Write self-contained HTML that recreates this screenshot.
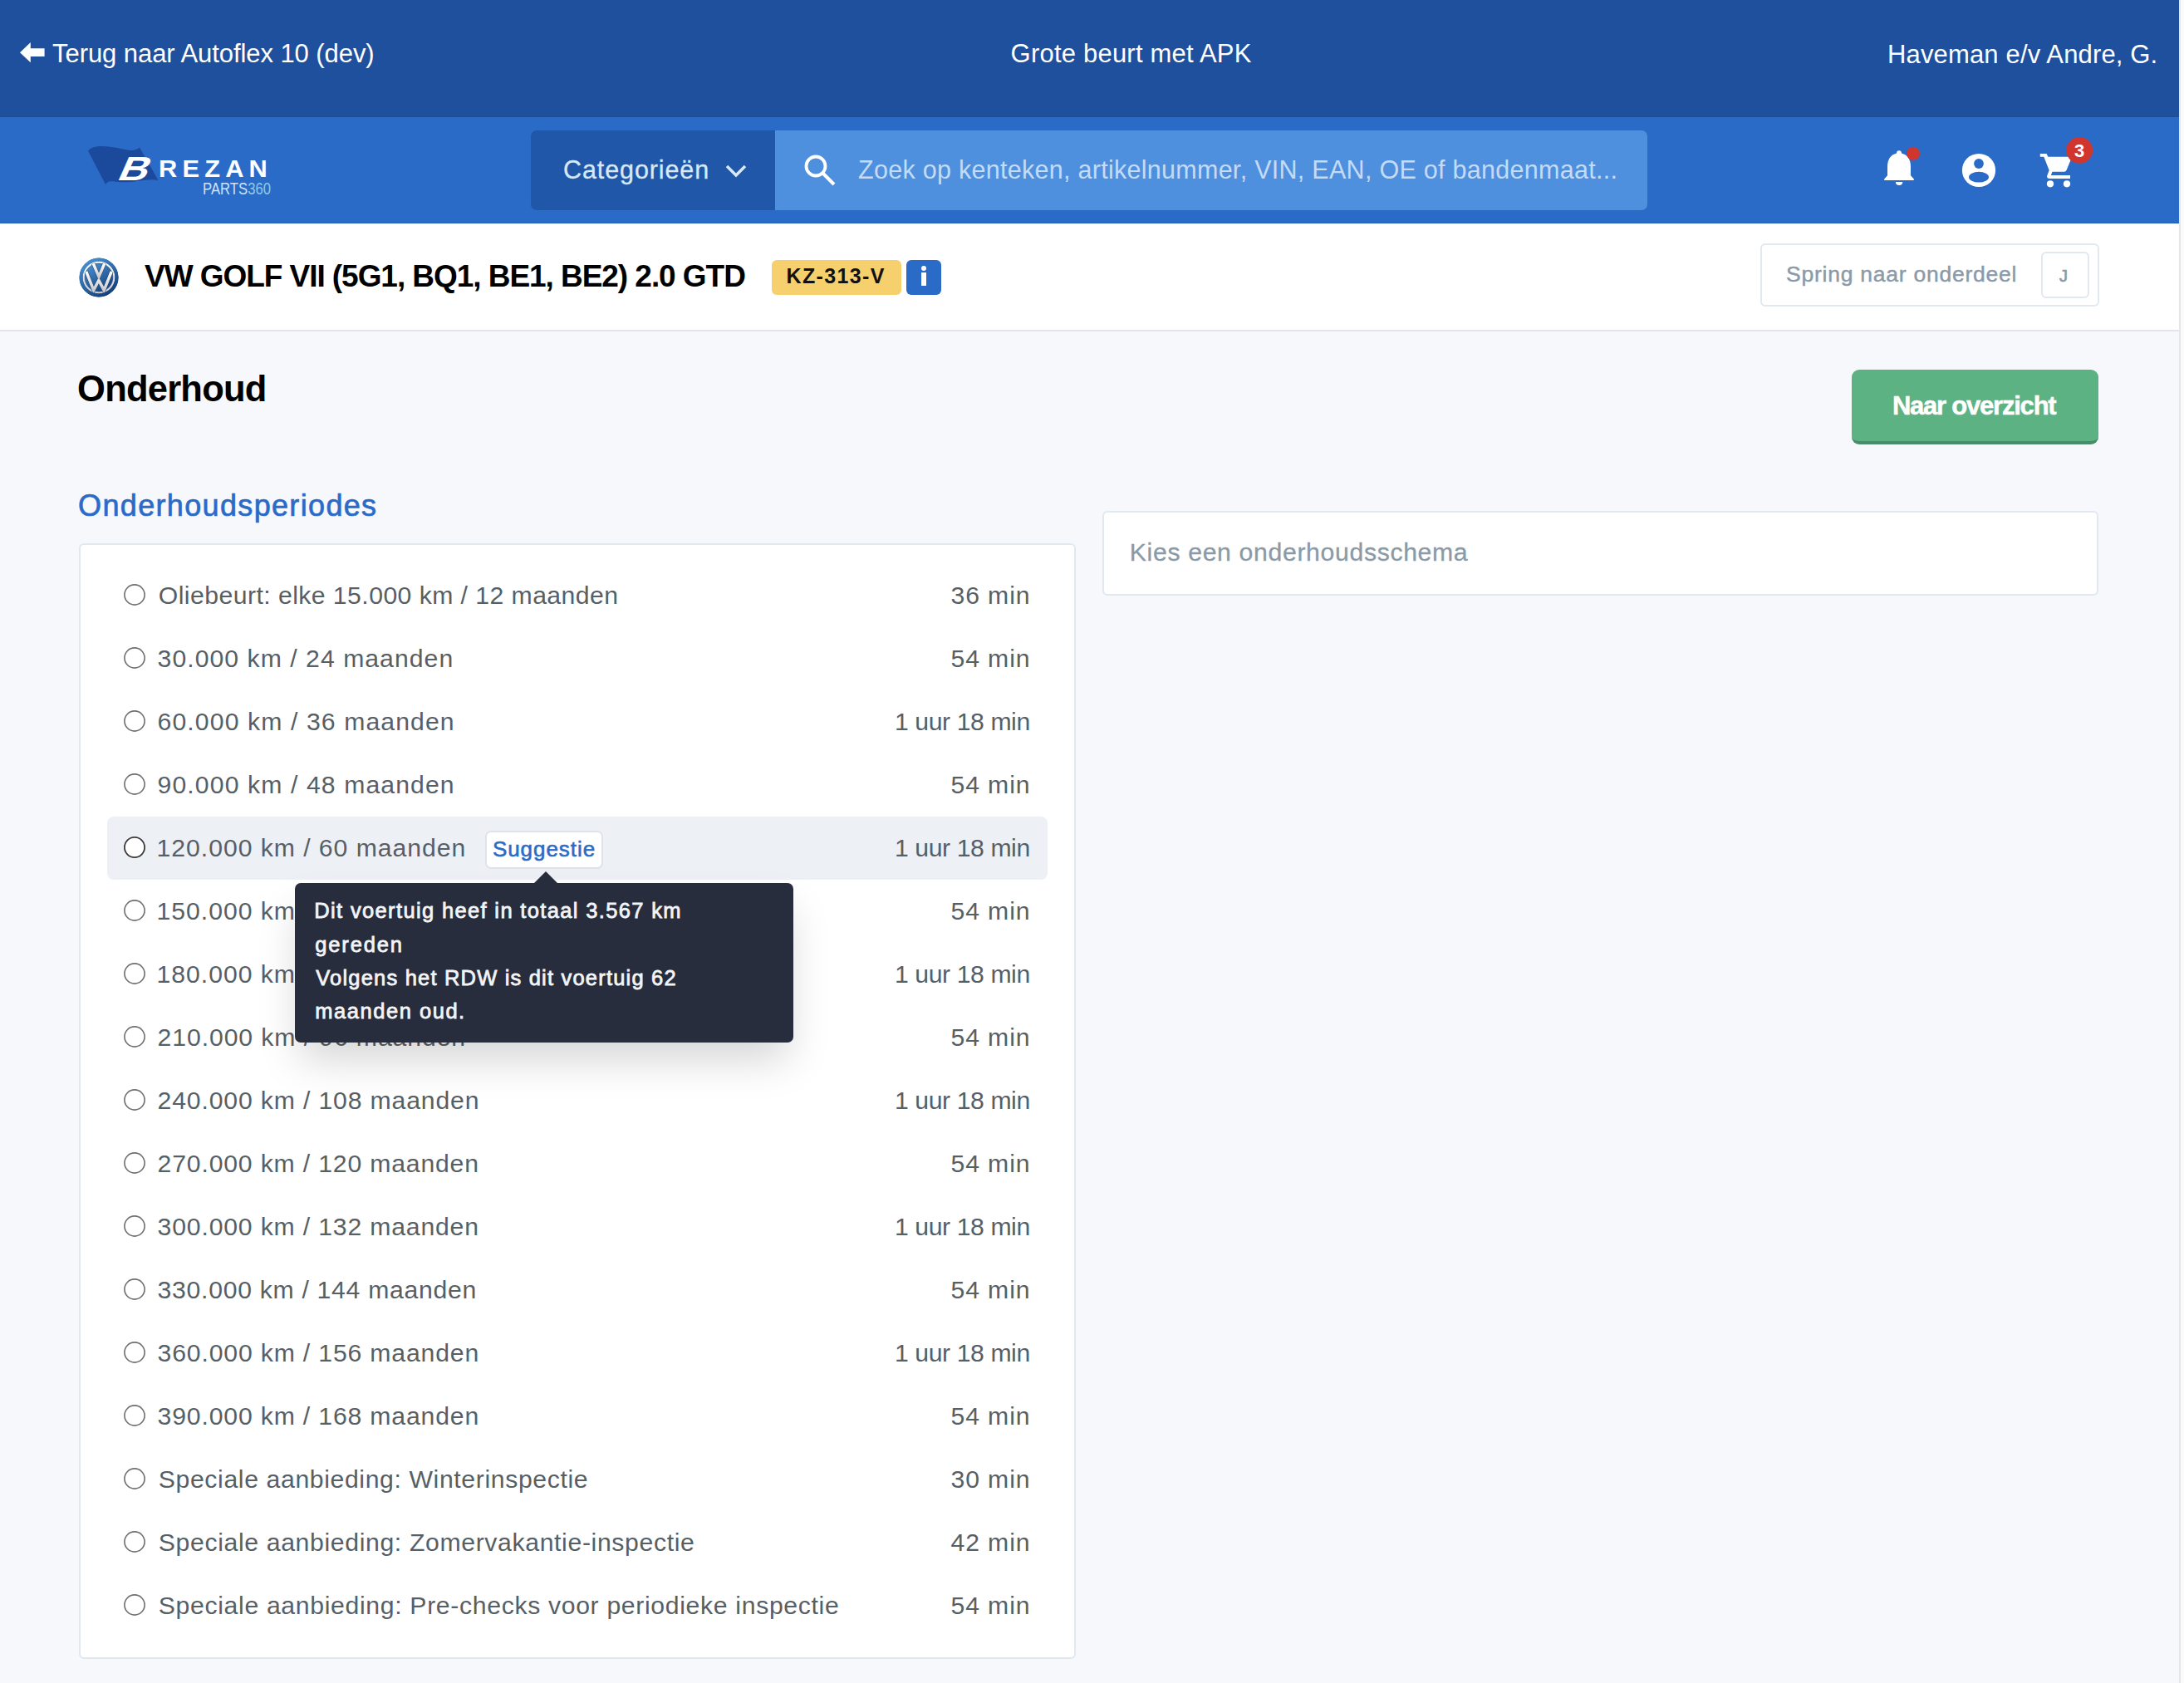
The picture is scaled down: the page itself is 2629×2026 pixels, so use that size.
<!DOCTYPE html>
<html><head><meta charset="utf-8">
<style>
html,body{margin:0;padding:0;}
body{width:2629px;height:2026px;overflow:hidden;position:relative;background:#f7f8fc;font-family:"Liberation Sans",sans-serif;-webkit-font-smoothing:antialiased;}
.a{position:absolute;white-space:nowrap;line-height:1;}
.blk{position:absolute;}
#top{left:0;top:0;width:2623px;height:141px;background:#1f509d;box-sizing:border-box;border-bottom:1px solid #1e4d98;}
#nav{left:0;top:141px;width:2623px;height:128px;background:#2b6bc8;box-sizing:border-box;border-bottom:1px solid #1d5dc0;}
#veh{left:0;top:269px;width:2623px;height:128px;background:#fff;border-bottom:2px solid #e2e5ec;}
#sb{left:2623px;top:0;width:6px;height:2026px;background:#fafafa;border-left:2px solid #e6e6e6;box-sizing:border-box;}
#cat{left:639px;top:157px;width:294px;height:96px;background:#2157a8;border-radius:7px 0 0 7px;}
#search{left:933px;top:157px;width:1050px;height:96px;background:#4f90de;border-radius:0 7px 7px 0;}
#jump{left:2119px;top:293px;width:408px;height:76px;box-sizing:border-box;border:2px solid #e1e8f0;border-radius:6px;background:#fff;}
#jkey{left:2457px;top:303px;width:58px;height:56px;box-sizing:border-box;border:2px solid #e1e8f0;border-radius:6px;background:#fff;}
#plate{left:929px;top:313px;width:156px;height:42px;background:#f7d06e;border-radius:6px;}
#info{left:1091px;top:313px;width:42px;height:42px;background:#2b6bc8;border-radius:6px;}
#btn{left:2229px;top:445px;width:297px;height:90px;box-sizing:border-box;background:#5db283;border-radius:9px;border-bottom:4px solid #4a8c69;}
#kies{left:1327px;top:615px;width:1199px;height:102px;box-sizing:border-box;background:#fff;border:2px solid #e1e8f0;border-radius:6px;}
#card{left:95px;top:654px;width:1200px;height:1343px;box-sizing:border-box;background:#fff;border:2px solid #e1e8f0;border-radius:6px;}
#hl{left:129px;top:983px;width:1132px;height:76px;background:#edf0f5;border-radius:8px;}
.rad{position:absolute;left:149px;}
#sugg{left:584px;top:1000px;width:142px;height:46px;box-sizing:border-box;background:#fff;border:2px solid #dfe2e8;border-radius:7px;}
#tip{left:355px;top:1063px;width:600px;height:192px;background:#272d3c;border-radius:7px;box-shadow:0 26px 50px -6px rgba(0,0,0,0.17);}
</style></head><body>
<div id="top" class="blk"></div>
<div id="nav" class="blk"></div>
<div id="veh" class="blk"></div>
<div id="sb" class="blk"></div>

<!-- top bar -->
<svg class="a" style="left:24px;top:50.6px" width="30" height="25" viewBox="0 0 30 25"><path d="M0 12.15 L12.8 0 L12.8 7.3 L29.6 7.3 L29.6 16.9 L12.8 16.9 L12.8 24.3 Z" fill="#fff"/></svg>
<div class="a" style="left:63.1px;top:49.0px;font-size:31px;color:#fff;letter-spacing:-0.07px">Terug naar Autoflex 10 (dev)</div>
<div class="a" style="left:1216.6px;top:49.2px;font-size:31px;color:#fff;letter-spacing:0.21px">Grote beurt met APK</div>
<div class="a" style="left:2272.0px;top:49.8px;font-size:31px;color:#fff;letter-spacing:0.15px">Haveman e/v Andre, G.</div>

<!-- nav -->
<svg class="a" style="left:100px;top:165px" width="240" height="80" viewBox="0 0 240 80">
 <path d="M6 16.5 C12 9 28 10 48 14.5 C58 17 64 16 68 12.5 L90.5 52 C76 49 62 56 42 54 C34 53 30 52 27 57 Z" fill="#1b4a9c"/>
 <text x="0" y="0" transform="translate(39.5,51.6) skewX(-24) scale(1.22,1)" font-family="Liberation Sans" font-weight="bold" font-size="40.6" fill="#fff">B</text>
 <text x="91" y="47.8" font-family="Liberation Sans" font-weight="bold" font-size="29.9" letter-spacing="6" textLength="137" lengthAdjust="spacingAndGlyphs" fill="#fff">REZAN</text>
 <text x="144" y="68.7" font-family="Liberation Sans" font-size="20.8" textLength="82" lengthAdjust="spacingAndGlyphs" fill="#cfe1f6">PARTS<tspan fill="#8cc9e6">360</tspan></text>
</svg>
<div id="cat" class="blk"></div>
<div id="search" class="blk"></div>
<div class="a" style="left:678.0px;top:189.0px;font-size:30.5px;color:#d7e8f7;letter-spacing:0.9px;-webkit-text-stroke:0.3px #d7e8f7">Categorieën</div>
<svg class="a" style="left:872px;top:197px" width="28" height="18" viewBox="0 0 28 18"><path d="M3 3 L14 14 L25 3" fill="none" stroke="#d7e8f7" stroke-width="3.5"/></svg>
<svg class="a" style="left:965px;top:183px" width="44" height="44" viewBox="0 0 44 44"><circle cx="17" cy="17" r="11.5" fill="none" stroke="#fff" stroke-width="3.8"/><path d="M25.5 25.5 L39 39" stroke="#fff" stroke-width="4"/></svg>
<div class="a" style="left:1033.0px;top:189.0px;font-size:30.5px;color:#c3dbf6;letter-spacing:0.28px">Zoek op kenteken, artikelnummer, VIN, EAN, OE of bandenmaat...</div>

<!-- bell -->
<svg class="a" style="left:2262px;top:175px" width="56" height="56" viewBox="0 0 56 56">
 <path d="M21 9.6 Q21 6.2 24 6.2 Q27 6.2 27 9.6 Q38 12.5 38 26 L38 36.3 L41.8 40.6 L41.8 42 L6.2 42 L6.2 40.6 L10 36.3 L10 26 Q10 12.5 21 9.6 Z" fill="#fff"/>
 <path d="M19.9 44 L28.3 44 Q28.3 47.9 24.1 47.9 Q19.9 47.9 19.9 44 Z" fill="#fff"/>
 <circle cx="41" cy="9.8" r="8" fill="#d0362d"/>
</svg>
<!-- user -->
<svg class="a" style="left:2361px;top:184px" width="42" height="42" viewBox="0 0 42 42">
 <circle cx="21" cy="21" r="20.1" fill="#fff"/>
 <circle cx="21" cy="13" r="5.9" fill="#2b6bc8"/>
 <ellipse cx="21" cy="29.2" rx="12" ry="6.4" fill="#2b6bc8"/>
</svg>
<!-- cart -->
<svg class="a" style="left:2450px;top:160px" width="80" height="70" viewBox="0 0 80 70">
 <path d="M5.8 25 L13.5 25 L15.4 28.8 L44.2 28.8 L37.6 44.8 Q36.8 46.8 34.6 46.8 L20.5 46.8 L18.8 51 L42 51 L42 54.9 L17.5 54.9 Q13.2 54.9 14.3 51.3 L16.7 45 L10.3 28.8 L5.8 28.8 Z" fill="#fff"/>
 <circle cx="18" cy="61.3" r="4.1" fill="#fff"/>
 <circle cx="38" cy="61.3" r="4.1" fill="#fff"/>
 <circle cx="53.2" cy="20.9" r="15.9" fill="#d0362d"/>
 <text x="53" y="29" text-anchor="middle" font-family="Liberation Sans" font-weight="bold" font-size="22" fill="#fff">3</text>
</svg>

<!-- vehicle bar -->
<svg class="a" style="left:95px;top:310px" width="48" height="48" viewBox="0 0 48 48">
 <defs><linearGradient id="vg" x1="0.2" y1="0" x2="0.8" y2="1"><stop offset="0" stop-color="#4a8fcf"/><stop offset="1" stop-color="#123e7a"/></linearGradient>
 <linearGradient id="vs" x1="0" y1="0" x2="0" y2="1"><stop offset="0" stop-color="#ffffff"/><stop offset="1" stop-color="#c9cbcf"/></linearGradient></defs>
 <circle cx="24" cy="24" r="23.5" fill="url(#vg)"/>
 <circle cx="24" cy="24" r="19.5" fill="url(#vs)"/>
 <circle cx="24" cy="24" r="16.9" fill="url(#vg)" stroke="#1b3f70" stroke-width="0.6"/>
 <path d="M8.8 16.9 L17.7 39.4 L23.9 27.3 L30.2 39.4 L39.2 16.9" fill="none" stroke="#1b3f70" stroke-width="4.6" stroke-linejoin="miter"/>
 <path d="M17.3 7.2 L24 23.2 L30.7 7.2" fill="none" stroke="#1b3f70" stroke-width="4.6"/>
 <path d="M8.8 16.9 L17.7 39.4 L23.9 27.3 L30.2 39.4 L39.2 16.9" fill="none" stroke="url(#vs)" stroke-width="3.6" stroke-linejoin="miter"/>
 <path d="M17.3 7.2 L24 23.2 L30.7 7.2" fill="none" stroke="url(#vs)" stroke-width="3.6"/>
 <circle cx="24" cy="24" r="21.45" fill="none" stroke="url(#vg)" stroke-width="4.1"/>
</svg>
<div class="a" style="left:174.0px;top:314.0px;font-size:37px;color:#000;letter-spacing:-1.05px;font-weight:bold">VW GOLF VII (5G1, BQ1, BE1, BE2) 2.0 GTD</div>
<div id="plate" class="blk"></div>
<div class="a" style="left:946.6px;top:320.2px;font-size:25px;color:#111;letter-spacing:1.34px;font-weight:bold">KZ-313-V</div>
<div id="info" class="blk"></div>
<div class="blk" style="left:1109px;top:320px;width:6px;height:6px;border-radius:50%;background:#fff"></div>
<div class="blk" style="left:1109px;top:328px;width:5.5px;height:16px;background:#fff"></div>
<div id="jump" class="blk"></div>
<div id="jkey" class="blk"></div>
<div class="a" style="left:2150.0px;top:316.9px;font-size:26.5px;color:#8a9aa8;letter-spacing:0.76px;-webkit-text-stroke:0.45px #8a9aa8">Spring naar onderdeel</div>
<div class="a" style="left:2479.0px;top:322.0px;font-size:20px;color:#8a9aa8;letter-spacing:0.0px;-webkit-text-stroke:0.7px #8a9aa8">J</div>

<!-- main -->
<div class="a" style="left:93.1px;top:447.2px;font-size:43.5px;color:#000;letter-spacing:-0.77px;font-weight:bold">Onderhoud</div>
<div id="btn" class="blk"></div>
<div class="a" style="left:2277.9px;top:473.3px;font-size:31px;color:#fff;letter-spacing:-1.22px;font-weight:bold;-webkit-text-stroke:0.5px #fff">Naar overzicht</div>
<div class="a" style="left:94.1px;top:591.0px;font-size:36px;color:#2b6bc8;letter-spacing:1.34px;-webkit-text-stroke:0.7px #2b6bc8">Onderhoudsperiodes</div>
<div id="kies" class="blk"></div>
<div class="a" style="left:1359.8px;top:649.7px;font-size:30.2px;color:#8a9aa6;letter-spacing:0.66px;-webkit-text-stroke:0.3px #8a9aa6">Kies een onderhoudsschema</div>

<div id="card" class="blk"></div>
<div id="hl" class="blk"></div>
<svg class="rad" style="top:703px" width="26" height="26"><circle cx="13" cy="13" r="12.1" fill="#fff" stroke="#6d7073" stroke-width="1.6"/></svg>
<div class="a" style="left:190.8px;top:702.2px;font-size:30.2px;color:#575f66;letter-spacing:0.44px">Oliebeurt: elke 15.000 km / 12 maanden</div>
<div class="a" style="left:1144.5px;top:702.2px;font-size:30.2px;color:#575f66;letter-spacing:0.88px">36 min</div>
<svg class="rad" style="top:779px" width="26" height="26"><circle cx="13" cy="13" r="12.1" fill="#fff" stroke="#6d7073" stroke-width="1.6"/></svg>
<div class="a" style="left:189.6px;top:778.2px;font-size:30.2px;color:#575f66;letter-spacing:1.03px">30.000 km / 24 maanden</div>
<div class="a" style="left:1144.5px;top:778.2px;font-size:30.2px;color:#575f66;letter-spacing:0.88px">54 min</div>
<svg class="rad" style="top:855px" width="26" height="26"><circle cx="13" cy="13" r="12.1" fill="#fff" stroke="#6d7073" stroke-width="1.6"/></svg>
<div class="a" style="left:189.6px;top:854.2px;font-size:30.2px;color:#575f66;letter-spacing:1.1px">60.000 km / 36 maanden</div>
<div class="a" style="left:1077.0px;top:854.2px;font-size:30.2px;color:#575f66;letter-spacing:-0.42px">1 uur 18 min</div>
<svg class="rad" style="top:931px" width="26" height="26"><circle cx="13" cy="13" r="12.1" fill="#fff" stroke="#6d7073" stroke-width="1.6"/></svg>
<div class="a" style="left:189.6px;top:930.2px;font-size:30.2px;color:#575f66;letter-spacing:1.1px">90.000 km / 48 maanden</div>
<div class="a" style="left:1144.5px;top:930.2px;font-size:30.2px;color:#575f66;letter-spacing:0.88px">54 min</div>
<svg class="rad" style="top:1007px" width="26" height="26"><circle cx="13" cy="13" r="12.1" fill="#fff" stroke="#3a3a3a" stroke-width="1.8"/></svg>
<div class="a" style="left:188.6px;top:1006.2px;font-size:30.2px;color:#575f66;letter-spacing:0.95px">120.000 km / 60 maanden</div>
<div class="a" style="left:1077.0px;top:1006.2px;font-size:30.2px;color:#575f66;letter-spacing:-0.42px">1 uur 18 min</div>
<svg class="rad" style="top:1083px" width="26" height="26"><circle cx="13" cy="13" r="12.1" fill="#fff" stroke="#6d7073" stroke-width="1.6"/></svg>
<div class="a" style="left:188.6px;top:1082.2px;font-size:30.2px;color:#575f66;letter-spacing:0.95px">150.000 km / 72 maanden</div>
<div class="a" style="left:1144.5px;top:1082.2px;font-size:30.2px;color:#575f66;letter-spacing:0.88px">54 min</div>
<svg class="rad" style="top:1159px" width="26" height="26"><circle cx="13" cy="13" r="12.1" fill="#fff" stroke="#6d7073" stroke-width="1.6"/></svg>
<div class="a" style="left:188.6px;top:1158.2px;font-size:30.2px;color:#575f66;letter-spacing:0.95px">180.000 km / 84 maanden</div>
<div class="a" style="left:1077.0px;top:1158.2px;font-size:30.2px;color:#575f66;letter-spacing:-0.42px">1 uur 18 min</div>
<svg class="rad" style="top:1235px" width="26" height="26"><circle cx="13" cy="13" r="12.1" fill="#fff" stroke="#6d7073" stroke-width="1.6"/></svg>
<div class="a" style="left:189.6px;top:1234.2px;font-size:30.2px;color:#575f66;letter-spacing:0.9px">210.000 km / 96 maanden</div>
<div class="a" style="left:1144.5px;top:1234.2px;font-size:30.2px;color:#575f66;letter-spacing:0.88px">54 min</div>
<svg class="rad" style="top:1311px" width="26" height="26"><circle cx="13" cy="13" r="12.1" fill="#fff" stroke="#6d7073" stroke-width="1.6"/></svg>
<div class="a" style="left:189.6px;top:1310.2px;font-size:30.2px;color:#575f66;letter-spacing:0.84px">240.000 km / 108 maanden</div>
<div class="a" style="left:1077.0px;top:1310.2px;font-size:30.2px;color:#575f66;letter-spacing:-0.42px">1 uur 18 min</div>
<svg class="rad" style="top:1387px" width="26" height="26"><circle cx="13" cy="13" r="12.1" fill="#fff" stroke="#6d7073" stroke-width="1.6"/></svg>
<div class="a" style="left:189.6px;top:1386.2px;font-size:30.2px;color:#575f66;letter-spacing:0.82px">270.000 km / 120 maanden</div>
<div class="a" style="left:1144.5px;top:1386.2px;font-size:30.2px;color:#575f66;letter-spacing:0.88px">54 min</div>
<svg class="rad" style="top:1463px" width="26" height="26"><circle cx="13" cy="13" r="12.1" fill="#fff" stroke="#6d7073" stroke-width="1.6"/></svg>
<div class="a" style="left:189.6px;top:1462.2px;font-size:30.2px;color:#575f66;letter-spacing:0.82px">300.000 km / 132 maanden</div>
<div class="a" style="left:1077.0px;top:1462.2px;font-size:30.2px;color:#575f66;letter-spacing:-0.42px">1 uur 18 min</div>
<svg class="rad" style="top:1539px" width="26" height="26"><circle cx="13" cy="13" r="12.1" fill="#fff" stroke="#6d7073" stroke-width="1.6"/></svg>
<div class="a" style="left:189.6px;top:1538.2px;font-size:30.2px;color:#575f66;letter-spacing:0.7px">330.000 km / 144 maanden</div>
<div class="a" style="left:1144.5px;top:1538.2px;font-size:30.2px;color:#575f66;letter-spacing:0.88px">54 min</div>
<svg class="rad" style="top:1615px" width="26" height="26"><circle cx="13" cy="13" r="12.1" fill="#fff" stroke="#6d7073" stroke-width="1.6"/></svg>
<div class="a" style="left:189.6px;top:1614.2px;font-size:30.2px;color:#575f66;letter-spacing:0.83px">360.000 km / 156 maanden</div>
<div class="a" style="left:1077.0px;top:1614.2px;font-size:30.2px;color:#575f66;letter-spacing:-0.42px">1 uur 18 min</div>
<svg class="rad" style="top:1691px" width="26" height="26"><circle cx="13" cy="13" r="12.1" fill="#fff" stroke="#6d7073" stroke-width="1.6"/></svg>
<div class="a" style="left:189.6px;top:1690.2px;font-size:30.2px;color:#575f66;letter-spacing:0.83px">390.000 km / 168 maanden</div>
<div class="a" style="left:1144.5px;top:1690.2px;font-size:30.2px;color:#575f66;letter-spacing:0.88px">54 min</div>
<svg class="rad" style="top:1767px" width="26" height="26"><circle cx="13" cy="13" r="12.1" fill="#fff" stroke="#6d7073" stroke-width="1.6"/></svg>
<div class="a" style="left:190.8px;top:1766.2px;font-size:30.2px;color:#575f66;letter-spacing:0.62px">Speciale aanbieding: Winterinspectie</div>
<div class="a" style="left:1144.5px;top:1766.2px;font-size:30.2px;color:#575f66;letter-spacing:0.88px">30 min</div>
<svg class="rad" style="top:1843px" width="26" height="26"><circle cx="13" cy="13" r="12.1" fill="#fff" stroke="#6d7073" stroke-width="1.6"/></svg>
<div class="a" style="left:190.8px;top:1842.2px;font-size:30.2px;color:#575f66;letter-spacing:0.64px">Speciale aanbieding: Zomervakantie-inspectie</div>
<div class="a" style="left:1144.5px;top:1842.2px;font-size:30.2px;color:#575f66;letter-spacing:0.88px">42 min</div>
<svg class="rad" style="top:1919px" width="26" height="26"><circle cx="13" cy="13" r="12.1" fill="#fff" stroke="#6d7073" stroke-width="1.6"/></svg>
<div class="a" style="left:190.8px;top:1918.2px;font-size:30.2px;color:#575f66;letter-spacing:0.66px">Speciale aanbieding: Pre-checks voor periodieke inspectie</div>
<div class="a" style="left:1144.5px;top:1918.2px;font-size:30.2px;color:#575f66;letter-spacing:0.88px">54 min</div>
<div id="sugg" class="blk"></div>
<div class="a" style="left:592.9px;top:1009.2px;font-size:26px;color:#2b6bc8;letter-spacing:0.95px;-webkit-text-stroke:0.6px #2b6bc8">Suggestie</div>

<div id="tip" class="blk"></div>
<svg class="a" style="left:642px;top:1048px" width="30" height="16" viewBox="0 0 30 16"><path d="M0 16 L15 1 L30 16 Z" fill="#272d3c"/></svg>
<div class="a" style="left:378.3px;top:1084.3px;font-size:25.5px;color:#f3f4f6;letter-spacing:1.35px;-webkit-text-stroke:0.8px #f3f4f6">Dit voertuig heef in totaal 3.567 km</div>
<div class="a" style="left:379.3px;top:1124.7px;font-size:25.5px;color:#f3f4f6;letter-spacing:1.83px;-webkit-text-stroke:0.8px #f3f4f6">gereden</div>
<div class="a" style="left:380.3px;top:1164.6px;font-size:25.5px;color:#f3f4f6;letter-spacing:1.19px;-webkit-text-stroke:0.8px #f3f4f6">Volgens het RDW is dit voertuig 62</div>
<div class="a" style="left:379.3px;top:1205.0px;font-size:25.5px;color:#f3f4f6;letter-spacing:1.53px;-webkit-text-stroke:0.8px #f3f4f6">maanden oud.</div>
</body></html>
